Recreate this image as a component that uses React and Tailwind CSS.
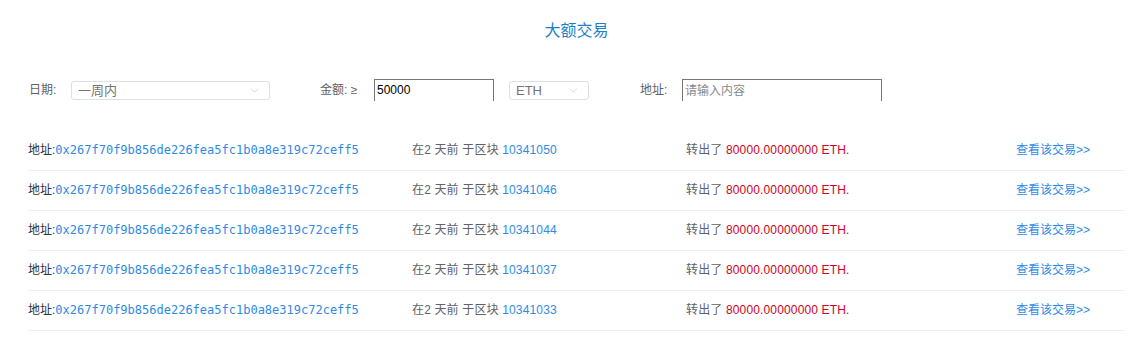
import { ChevronDown } from 'lucide-react';

const rows = ['10341050', '10341046', '10341044', '10341037', '10341033'];
const hash = '0x267f70f9b856de226fea5fc1b0a8e319c72ceff5';

function Select({ value, width }) {
  return (
    <div className={`flex items-center justify-between h-[19px] ${width} border border-[#dcdfe6] rounded-[3px] pl-[6px] pr-[8px] bg-white`}>
      <span className="text-[13px] text-[#747474] leading-none">{value}</span>
      <ChevronDown className="w-[13px] h-[13px] text-[#c0c4cc]" strokeWidth={1.2} />
    </div>
  );
}

export default function App() {
  return (
    <div className="w-[1143px] h-[343px] bg-white font-['Liberation_Sans','Noto_Sans_CJK_SC',sans-serif] overflow-hidden">
      <h1 className="pt-[20px] pl-[10px] text-center text-[16px] leading-[22px] text-[#1e7fc8]">大额交易</h1>

      <div className="flex items-center mt-[37px] h-[22px] text-[12px] text-[#606266]">
        <span className="ml-[29px] w-[42px]">日期:</span>
        <Select value="一周内" width="w-[199px]" />
        <span className="ml-[50px] w-[54px]">金额: ≥</span>
        <div className="w-[120px] h-[22px] border-t border-x border-[#767676] pl-[2px] pt-[4px] text-[12px] text-black leading-none">50000</div>
        <div className="ml-[15px]">
          <Select value="ETH" width="w-[80px]" />
        </div>
        <span className="ml-[51px] w-[42px]">地址:</span>
        <div className="w-[200px] h-[22px] border-t border-x border-[#767676] pl-[2px] pt-[5px] text-[12px] text-[#8a8a8a] leading-none">请输入内容</div>
      </div>

      <div className="mt-[30px] ml-[28px] w-[1097px]">
        {rows.map((b) => (
          <div key={b} className="flex items-center h-[40px] pb-[2px] border-b border-[#ebeef5] text-[12px]">
            <div className="w-[384px] text-[#303133]">
              地址:<span className="font-['DejaVu_Sans_Mono',monospace] text-[#2f8ae5]">{hash}</span>
            </div>
            <div className="w-[274px] text-[#606266] tracking-[0.15px]">
              在2 天前 于区块 <span className="text-[#2f8ae5]">{b}</span>
            </div>
            <div className="w-[330px] text-[#606266] tracking-[0.15px]">
              转出了 <span className="text-[#d0021b]">80000.00000000 ETH.</span>
            </div>
            <div className="text-[#2f8ae5]">查看该交易&gt;&gt;</div>
          </div>
        ))}
      </div>
    </div>
  );
}
